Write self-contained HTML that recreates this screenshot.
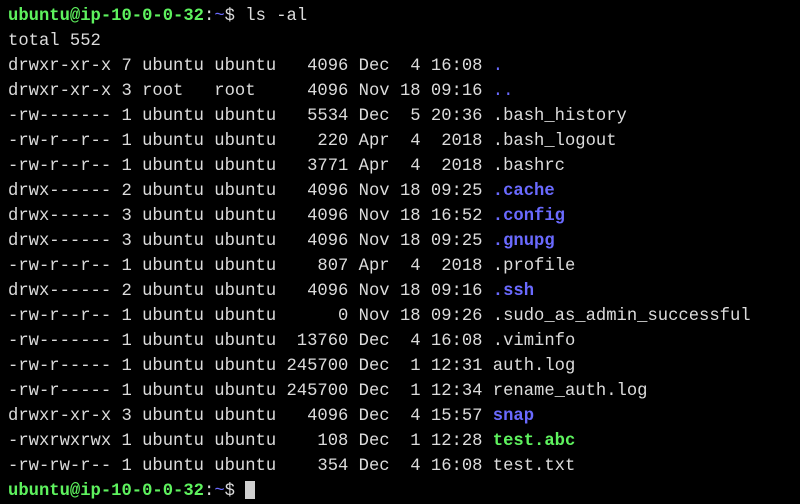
<!DOCTYPE html>
<html><head><style>
html,body{margin:0;padding:0;background:#000;width:800px;height:488px;overflow:hidden}
pre{margin:0;position:absolute;left:8px;top:4px;font-family:"Liberation Mono",monospace;font-size:17.2px;line-height:25px;color:#dcdcdc}
.g{color:#5ef25e;font-weight:bold}
.b{color:#6a6aff}
.bb{color:#6a6aff;font-weight:bold}
.cur{display:inline-block;width:10px;height:18px;background:#d0d0d0;vertical-align:-4px}
</style></head><body>
<pre><span class="g">ubuntu@ip-10-0-0-32</span>:<span class="b">~</span>$ ls -al
total 552
drwxr-xr-x 7 ubuntu ubuntu   4096 Dec  4 16:08 <span class="b">.</span>
drwxr-xr-x 3 root   root     4096 Nov 18 09:16 <span class="b">..</span>
-rw------- 1 ubuntu ubuntu   5534 Dec  5 20:36 .bash_history
-rw-r--r-- 1 ubuntu ubuntu    220 Apr  4  2018 .bash_logout
-rw-r--r-- 1 ubuntu ubuntu   3771 Apr  4  2018 .bashrc
drwx------ 2 ubuntu ubuntu   4096 Nov 18 09:25 <span class="bb">.cache</span>
drwx------ 3 ubuntu ubuntu   4096 Nov 18 16:52 <span class="bb">.config</span>
drwx------ 3 ubuntu ubuntu   4096 Nov 18 09:25 <span class="bb">.gnupg</span>
-rw-r--r-- 1 ubuntu ubuntu    807 Apr  4  2018 .profile
drwx------ 2 ubuntu ubuntu   4096 Nov 18 09:16 <span class="bb">.ssh</span>
-rw-r--r-- 1 ubuntu ubuntu      0 Nov 18 09:26 .sudo_as_admin_successful
-rw------- 1 ubuntu ubuntu  13760 Dec  4 16:08 .viminfo
-rw-r----- 1 ubuntu ubuntu 245700 Dec  1 12:31 auth.log
-rw-r----- 1 ubuntu ubuntu 245700 Dec  1 12:34 rename_auth.log
drwxr-xr-x 3 ubuntu ubuntu   4096 Dec  4 15:57 <span class="bb">snap</span>
-rwxrwxrwx 1 ubuntu ubuntu    108 Dec  1 12:28 <span class="g">test.abc</span>
-rw-rw-r-- 1 ubuntu ubuntu    354 Dec  4 16:08 test.txt
<span class="g">ubuntu@ip-10-0-0-32</span>:<span class="b">~</span>$ <span class="cur"></span></pre>
</body></html>
